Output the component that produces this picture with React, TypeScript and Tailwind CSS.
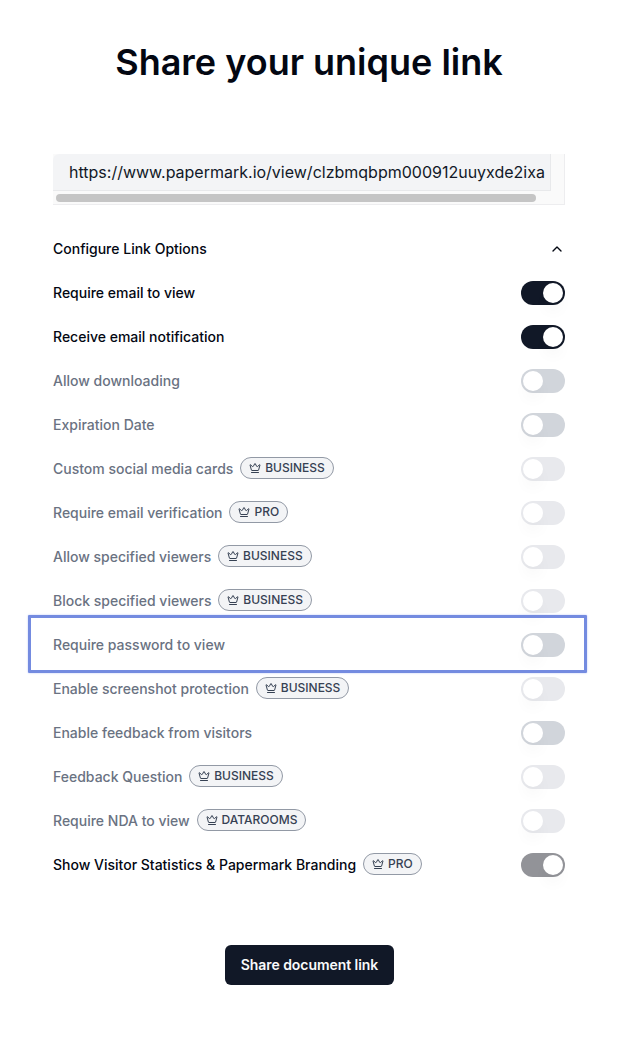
import React, { useState } from "react";
import { ChevronUp, Crown } from "lucide-react";

type Option = {
  label: string;
  plan?: string;
  enabled?: boolean;
  highlighted?: boolean;
};

const OPTIONS: Option[] = [
  { label: "Require email to view", enabled: true },
  { label: "Receive email notification", enabled: true },
  { label: "Allow downloading" },
  { label: "Expiration Date" },
  { label: "Custom social media cards", plan: "BUSINESS" },
  { label: "Require email verification", plan: "PRO" },
  { label: "Allow specified viewers", plan: "BUSINESS" },
  { label: "Block specified viewers", plan: "BUSINESS" },
  { label: "Require password to view", highlighted: true },
  { label: "Enable screenshot protection", plan: "BUSINESS" },
  { label: "Enable feedback from visitors" },
  { label: "Feedback Question", plan: "BUSINESS" },
  { label: "Require NDA to view", plan: "DATAROOMS" },
  { label: "Show Visitor Statistics & Papermark Branding", plan: "PRO", enabled: true },
];

function PlanBadge({ plan }: { plan: string }) {
  return (
    <span className="-mt-0.5 flex h-[22px] items-center gap-1 rounded-full border border-[#9299a5] bg-[#f3f4f6] px-2 text-xs font-medium text-gray-700">
      <Crown className="h-3 w-3 shrink-0" />
      <span>{plan}</span>
    </span>
  );
}

function Toggle({
  checked,
  disabled,
  label,
  onChange,
}: {
  checked: boolean;
  disabled: boolean;
  label: string;
  onChange: () => void;
}) {
  const track = checked
    ? disabled ? "bg-[#929398]" : "bg-[#111827]"
    : disabled ? "bg-[#e8e9ed]" : "bg-[#d1d5db]";

  return (
    <button
      role="switch"
      aria-checked={checked}
      aria-label={label}
      disabled={disabled}
      onClick={onChange}
      className={`flex h-6 w-11 shrink-0 items-center rounded-full border-2 border-transparent ${track}`}
    >
      <span
        className={`h-5 w-5 rounded-full bg-white shadow-[0_10px_15px_-3px_rgb(0_0_0/0.05)] ${checked ? "translate-x-5" : "translate-x-0"}`}
      />
    </button>
  );
}

function OptionRow({ option }: { option: Option }) {
  const [checked, setChecked] = useState(Boolean(option.enabled));

  return (
    <div className="relative flex h-6 items-center justify-between">
      {option.highlighted && (
        <div className="pointer-events-none absolute -top-[18px] -right-[22px] -bottom-[16px] -left-[25.5px] rounded-[1px] border-3 border-[#748be0] shadow-[0_0_2px_#b4c2f5]" />
      )}
      <div className="flex items-center gap-[6.9px]">
        <span className={`text-sm font-medium ${checked ? "text-[#030712]" : "text-gray-500"}`}>
          {option.label}
        </span>
        {option.plan && <PlanBadge plan={option.plan} />}
      </div>
      <Toggle
        checked={checked}
        disabled={Boolean(option.plan)}
        label={option.label}
        onChange={() => setChecked(!checked)}
      />
    </div>
  );
}

export default function App() {
  return (
    <div className="h-[1038px] w-[624px] bg-white pt-10 pl-[53px] font-['Inter',sans-serif] text-[#030712]">
      <div className="flex w-[512px] flex-col">
        <h1 className="text-center text-4xl leading-[45px] font-semibold">
          Share your unique link
        </h1>

        {/* Link field with its horizontal scrollbar */}
        <div className="mt-[69px] h-[51px] border-r border-b border-[#ededef] bg-[#fafafa]">
          <div className="flex h-[37px] w-[498px] items-center rounded-tl-md border-r border-b border-[#e8e9eb] bg-[#f3f4f6] pl-4 text-base whitespace-nowrap text-[#111827]">
            https://www.papermark.io/view/clzbmqbpm000912uuyxde2ixa
          </div>
          <div className="mt-[3px] ml-[3px] h-2 w-[480px] rounded-full bg-[#c5c5c5]" />
        </div>

        {/* Link options */}
        <div className="mt-8 flex flex-col gap-5">
          <div className="flex h-6 items-center justify-between">
            <span className="text-sm font-medium">Configure Link Options</span>
            <ChevronUp className="h-4 w-4" />
          </div>
          {OPTIONS.map((option) => (
            <OptionRow key={option.label} option={option} />
          ))}
        </div>

        <button className="mt-[68px] ml-[172px] h-10 w-[169px] rounded-md bg-[#111827] text-sm font-semibold tracking-[-0.05px] text-[#f9fafb]">
          Share document link
        </button>
      </div>
    </div>
  );
}
